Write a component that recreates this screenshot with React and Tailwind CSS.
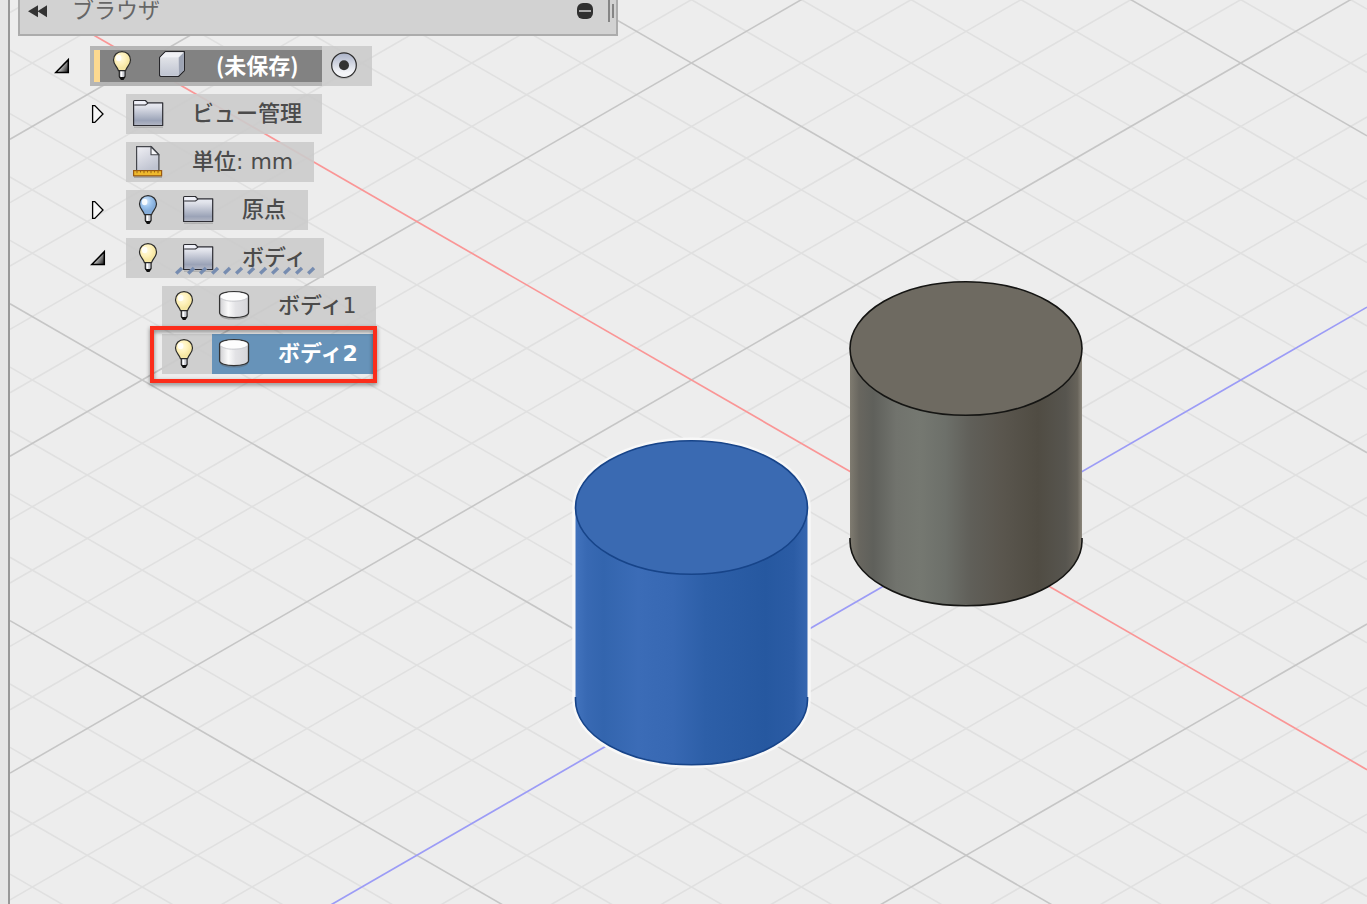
import React from "react";

const ORIGIN = { x: 966.1, y: 538.4 };
const STEP = { x: 54.93, y: 31.69 };
const SLOPE = STEP.y / STEP.x;
const INDEXES = Array.from({ length: 61 }, (_, n) => n - 30);

function GridLine({ dir, n, color, width }) {
  const y = (x) => ORIGIN.y + dir * SLOPE * (x - ORIGIN.x) + n * 2 * STEP.y;
  return <line x1="10" y1={y(10)} x2="1367" y2={y(1367)} stroke={color} strokeWidth={width} />;
}

function Cylinder({ cx, top, bottom, ry, side, face, edge, halo }) {
  const l = cx - 116;
  const r = cx + 116;
  const body = `M${l} ${top}A116 ${ry} 0 0 1 ${r} ${top}V${bottom}A116 ${ry - 2} 0 0 1 ${l} ${bottom}Z`;
  return (
    <g>
      {halo && <path d={body} fill="none" stroke="#f8f8f8" strokeWidth="6.5" />}
      <path d={body} fill={`url(#${side})`} />
      <ellipse cx={cx} cy={top} rx="116" ry={ry} fill={face} stroke={edge} strokeWidth="1.6" />
      <path d={`M${l} ${bottom - 3}V${bottom}A116 ${ry - 2} 0 0 0 ${r} ${bottom}V${bottom - 3}`} fill="none" stroke={edge} strokeWidth="1.6" />
    </g>
  );
}

function Scene() {
  return (
    <svg className="absolute inset-0" width="1367" height="904" viewBox="0 0 1367 904">
      <defs>
        <linearGradient id="blueSide">
          <stop offset="0" stopColor="#4273bd" />
          <stop offset=".05" stopColor="#3869b3" />
          <stop offset=".12" stopColor="#3365ae" />
          <stop offset=".27" stopColor="#3b6cb7" />
          <stop offset=".42" stopColor="#3768b3" />
          <stop offset=".56" stopColor="#2d5fa8" />
          <stop offset=".82" stopColor="#2658a0" />
          <stop offset=".94" stopColor="#2b5ca5" />
          <stop offset="1" stopColor="#3767b0" />
        </linearGradient>
        <linearGradient id="graySide">
          <stop offset="0" stopColor="#7f7b70" />
          <stop offset=".04" stopColor="#68665f" />
          <stop offset=".1" stopColor="#5f605b" />
          <stop offset=".2" stopColor="#71736d" />
          <stop offset=".3" stopColor="#757871" />
          <stop offset=".41" stopColor="#6d706a" />
          <stop offset=".52" stopColor="#605f59" />
          <stop offset=".65" stopColor="#5a564e" />
          <stop offset=".81" stopColor="#504c43" />
          <stop offset=".93" stopColor="#57554f" />
          <stop offset=".98" stopColor="#67635a" />
          <stop offset="1" stopColor="#8b867b" />
        </linearGradient>
      </defs>
      {INDEXES.filter((n) => n % 5 !== 0).map((n) => (
        <g key={n}>
          <GridLine dir={1} n={n} color="#e0e0e0" width="1.6" />
          <GridLine dir={-1} n={n} color="#e0e0e0" width="1.6" />
        </g>
      ))}
      {INDEXES.filter((n) => n % 5 === 0 && n !== 0).map((n) => (
        <g key={n}>
          <GridLine dir={1} n={n} color="#c6c6c6" width="1.6" />
          <GridLine dir={-1} n={n} color="#c6c6c6" width="1.6" />
        </g>
      ))}
      <GridLine dir={-1} n={0} color="#9c9cf6" width="1.7" />
      <GridLine dir={1} n={0} color="#fa9696" width="1.7" />
      <Cylinder cx={966} top={348.5} bottom={541} ry={66.8} side="graySide" face="#6e6a61" edge="#151513" />
      <Cylinder cx={691.5} top={507.5} bottom={700} ry={66.8} side="blueSide" face="#3a6ab2" edge="#174489" halo />
    </svg>
  );
}

const Slot = ({ children }) => (
  <svg width="44" height="40" viewBox="0 0 44 40" className="mr-1.5 shrink-0">
    {children}
  </svg>
);

const Bulb = ({ blue }) => (
  <Slot>
    <path d="M19.3 24.5h5.8v6l-1.4 1.4h-3l-1.4-1.4z" fill="#c9cbd2" stroke="#222" strokeWidth="1.2" />
    <path d="M21.5 25v6" stroke="#fff" strokeWidth="1.6" />
    <path d="M19 31h6.400l-1.900 2.900h-2.600z" fill="#111" />
    <path
      d="M22 5.600c-4.900 0-8.500 3.700-8.500 8.400 0 4.700 3.700 6.600 5 10.700h7c1.300-4.100 5-6 5-10.700 0-4.700-3.600-8.400-8.500-8.400z"
      fill={blue ? "url(#bulbBlue)" : "url(#bulbYellow)"}
      stroke="#2b2b2b"
      strokeWidth="1.2"
    />
    <ellipse cx="18.600" cy="12" rx="2.800" ry="3.300" fill="#fff" fillOpacity=".85" />
  </Slot>
);

const Folder = () => (
  <Slot>
    <path d="M8 33.200h29" stroke="#777" strokeOpacity=".35" strokeWidth="1.500" />
    <path d="M7.600 31.500V7.400q0-.9.900-.9h10.900l2.300 2.300h15v22.700z" fill="url(#steel)" stroke="#2d2d33" strokeWidth="1.200" strokeLinejoin="round" />
    <path d="M8.400 8.900h10.500" stroke="#f0f1f9" strokeWidth="3.200" />
    <path d="M8.200 11h11.300l2.600-1.900" fill="none" stroke="#2d2d33" strokeWidth="1.100" />
  </Slot>
);

const Sheet = () => (
  <Slot>
    <path d="M10.600 29V4.600h14.800l7.500 7.800V29z" fill="url(#paper)" stroke="#44464c" strokeWidth="1.200" />
    <path d="M25 4.900v7.800h7.600z" fill="#f8f8fb" stroke="#44464c" strokeWidth="1.100" />
    <path d="M8 35h28" stroke="#555" strokeOpacity=".45" strokeWidth="1.500" />
    <rect x="7.600" y="28.600" width="28" height="5.200" fill="#efb92c" stroke="#9a5a10" strokeWidth="1.200" />
    <path d="M11 29v2.200M14.500 29v1.500M18 29v2.200M21.500 29v1.500M25 29v2.200M28.500 29v1.500M32 29v2.200" stroke="#8b5210" strokeWidth=".8" />
  </Slot>
);

const Cube = () => (
  <Slot>
    <path d="M9.600 11.300L15.300 5.600H34.400V24.500L28.400 30.500H10.800L9.600 29.500z" fill="#dfe1e8" stroke="#26262a" strokeWidth="1.200" strokeLinejoin="round" />
    <path d="M10.400 11.500L15.600 6.300h18L28.200 11.500z" fill="#f0f1f5" />
    <path d="M28.600 11.800l5.200-5.200v17.600l-5.200 5.300z" fill="#9da4b4" />
    <path d="M10.300 11.800h18v18h-17.200l-.8-.6z" fill="url(#cubeFace)" />
  </Slot>
);

const Drum = () => (
  <Slot>
    <ellipse cx="22" cy="29.600" rx="14" ry="4" fill="#555" fillOpacity=".35" />
    <path d="M7.600 10.300C7.600 7.600 13.800 5.600 22 5.600s14.500 2 14.500 4.700V26.800c0 2.800-6.300 4.800-14.500 4.800S7.600 29.600 7.600 26.800z" fill="url(#drumSide)" stroke="#333" strokeWidth="1.300" />
    <ellipse cx="22" cy="10.400" rx="13.400" ry="4.100" fill="#fdfdfd" />
    <path d="M8.300 11.300c1 2.300 6.500 4 13.700 4s12.700-1.700 13.700-4" fill="none" stroke="#cdced2" strokeWidth="1" />
  </Slot>
);

const Eye = () => (
  <svg width="50" height="40" viewBox="0 0 50 40" className="shrink-0 bg-[#cbcbcb]/90">
    <circle cx="22" cy="20.300" r="12.500" fill="#888" fillOpacity=".4" />
    <circle cx="22" cy="19.200" r="12.300" fill="url(#eye)" stroke="#2c2c2c" strokeWidth="1.200" />
    <circle cx="22" cy="19.200" r="5" fill="#333" />
  </svg>
);

const Toggle = ({ open }) => (
  <svg width="36" height="40" viewBox="0 0 36 40" className="shrink-0">
    {open ? (
      <path d="M1.800 26.400H14.300V13.700z" fill="url(#toggle)" stroke="#000" strokeWidth="1.500" />
    ) : (
      <path d="M2.600 11.600h2.200l8.200 8.400-8.200 8.400H2.600z" fill="#f8f8f8" stroke="#000" strokeWidth="1.300" />
    )}
  </svg>
);

const SharedPaints = () => (
  <svg width="0" height="0" className="absolute">
    <defs>
      <radialGradient id="bulbYellow" cx=".4" cy=".35">
        <stop offset="0" stopColor="#fffbe0" />
        <stop offset=".6" stopColor="#fff2bc" />
        <stop offset="1" stopColor="#f6e7a4" />
      </radialGradient>
      <radialGradient id="bulbBlue" cx=".4" cy=".3">
        <stop offset="0" stopColor="#d6e8fa" />
        <stop offset=".6" stopColor="#9cc3ec" />
        <stop offset="1" stopColor="#86aedb" />
      </radialGradient>
      <linearGradient id="steel" x2="0" y2="1">
        <stop offset="0" stopColor="#eef0f8" />
        <stop offset=".25" stopColor="#e0e2ea" />
        <stop offset=".8" stopColor="#9ba3b7" />
        <stop offset="1" stopColor="#b3b7c4" />
      </linearGradient>
      <linearGradient id="paper" x2=".5" y2="1">
        <stop offset="0" stopColor="#f0f0f5" />
        <stop offset="1" stopColor="#bfc3d0" />
      </linearGradient>
      <linearGradient id="cubeFace" x2="0" y2="1">
        <stop offset="0" stopColor="#e0e2e7" />
        <stop offset="1" stopColor="#bfc4d1" />
      </linearGradient>
      <linearGradient id="drumSide">
        <stop offset="0" stopColor="#cfcfd2" />
        <stop offset=".3" stopColor="#fbfbfb" />
        <stop offset=".55" stopColor="#e3e3e6" />
        <stop offset="1" stopColor="#d5d5d9" />
      </linearGradient>
      <linearGradient id="eye" x2="0" y2="1">
        <stop offset="0" stopColor="#aab2c8" />
        <stop offset=".8" stopColor="#f4f5f8" />
      </linearGradient>
      <linearGradient id="toggle" x1="0" y1=".4" x2="1" y2="1">
        <stop offset=".2" stopColor="#eee" />
        <stop offset="1" stopColor="#111" />
      </linearGradient>
    </defs>
  </svg>
);

const Label = ({ children }) => (
  <span className="pl-4 font-['DejaVu_Sans','Noto_Sans_CJK_JP',sans-serif] text-[22px] leading-10 font-medium whitespace-nowrap text-[#4b4b4b]">
    {children}
  </span>
);

export default function App() {
  return (
    <div className="relative flex h-[904px] w-[1367px] overflow-hidden bg-[#ededed] font-['Noto_Sans_CJK_JP',sans-serif]">
      <Scene />
      <SharedPaints />
      <div className="relative w-2.5 shrink-0 border-r-2 border-[#989898] bg-[#e6e6e6]" />
      <div className="relative pl-2">
        <header className="flex h-9 w-[600px] items-start overflow-hidden border-x-2 border-b-2 border-[#acacac] bg-[#d2d2d2]">
          <svg width="52" height="34" viewBox="0 0 52 34" className="shrink-0">
            <path d="M8 11.200l10-6v12zM17.500 11.200l9.500-6v12z" fill="#333" />
          </svg>
          <span className="-mt-3 flex-1 text-[22px] leading-10 text-[#666]">ブラウザ</span>
          <svg width="40" height="34" viewBox="0 0 40 34" className="shrink-0">
            <rect x="1" y="3" width="16" height="16" rx="6" fill="#303030" />
            <path d="M3 11h12" stroke="#aaa" strokeWidth="2" />
            <path d="M33 0v22M37 4v14" stroke="#858585" strokeWidth="2" />
          </svg>
        </header>

        <main className="flex flex-col gap-2 pt-2.5 pl-9">
          <div className="flex h-10">
            <Toggle open />
            <div className="flex w-[232px] bg-[#b2b2b2]/95 py-1 pl-1">
              <div className="flex h-8 w-full items-center border-l-[6px] border-[#fdd990] bg-[#808080]/95">
                <Bulb />
                <Cube />
                <span className="-mt-1 pl-4 text-[22px] leading-8 font-bold whitespace-nowrap text-white">(未保存)</span>
              </div>
            </div>
            <Eye />
          </div>
          <div className="flex h-10 pl-9">
            <Toggle />
            <div className="flex w-[196px] bg-[#cbcbcb]/90">
              <Folder />
              <Label>ビュー管理</Label>
            </div>
          </div>
          <div className="flex h-10 pl-[72px]">
            <div className="flex w-[188px] bg-[#cbcbcb]/90">
              <Sheet />
              <Label>単位: mm</Label>
            </div>
          </div>
          <div className="flex h-10 pl-9">
            <Toggle />
            <div className="flex w-[182px] bg-[#cbcbcb]/90">
              <Bulb blue />
              <Folder />
              <Label>原点</Label>
            </div>
          </div>
          <div className="flex h-10 pl-9">
            <Toggle open />
            <div className="relative flex w-[198px] bg-[#cbcbcb]/90">
              <Bulb />
              <Folder />
              <Label>ボディ</Label>
              <svg className="absolute bottom-[3px] left-[49px]" width="142" height="9" viewBox="0 0 142 9">
                {Array.from({ length: 12 }, (_, i) => (
                  <path key={i} d={`M${i * 12 + 1.2} 7.400l5.800-5.500`} stroke="#768cb0" strokeWidth="3.400" />
                ))}
              </svg>
            </div>
          </div>
          <div className="flex h-10 pl-[108px]">
            <div className="flex w-[214px] bg-[#cbcbcb]/90">
              <Bulb />
              <Drum />
              <Label>ボディ1</Label>
            </div>
          </div>
          <div className="relative flex h-10 pl-[108px]">
            <div className="flex w-[50px] bg-[#cbcbcb]/90">
              <Bulb />
            </div>
            <div className="flex w-[164px] bg-[#6793b9]">
              <Drum />
              <span className="pl-4 font-['DejaVu_Sans','Noto_Sans_CJK_JP',sans-serif] text-[22px] leading-10 font-bold whitespace-nowrap text-white">ボディ2</span>
            </div>
            <div className="absolute -top-2 left-24 h-[57px] w-[227px] border-4 border-[#fb2d1b] drop-shadow-[0_2px_2px_rgba(0,0,0,0.45)]" />
          </div>
        </main>
      </div>
    </div>
  );
}
